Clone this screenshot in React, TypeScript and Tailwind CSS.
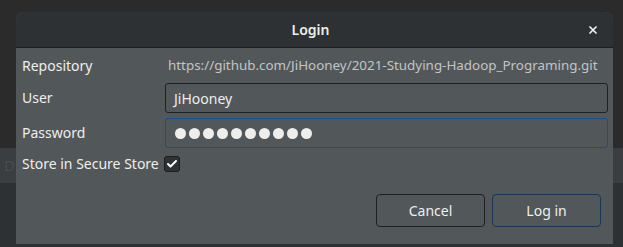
import { Check, X } from 'lucide-react';

const DOTS = 10;

export default function App() {
    return (
        <div className="relative w-[623px] h-[247px] overflow-hidden bg-[#2b2b2b] font-['Noto_Sans',sans-serif]">
            {/* window underneath the dialog */}
            <div className="flex flex-col h-full">
                <div className="h-[148px]" />
                <div className="h-[35px] bg-[#3b3e40] flex items-center px-1 text-[#4a4d4f] text-[15px]">D</div>
                <div className="flex-1 bg-[#2e3134]" />
            </div>

            <div className="absolute left-[16px] top-[12px] w-[597px] h-[232px] flex flex-col rounded-t-[8px] overflow-hidden bg-[#52575a] text-[#eeeeec] text-[14px]">
                <div className="relative h-[36px] shrink-0 flex items-center justify-center pr-[8px] bg-[#2d3134] border-b border-[#1c1f20]">
                    <span className="font-semibold text-[14px] text-[#eeeeec]">Login</span>
                    <X className="absolute right-[14px] top-1/2 -translate-y-1/2 w-[12px] h-[12px]" strokeWidth={3.5} />
                </div>

                <div className="flex-1 flex flex-col pl-[6px] pr-[5px] pt-[11px]">
                    <div className="grid grid-cols-[143px_minmax(0,1fr)] items-center gap-y-[5px]">
                        <span className="leading-none">Repository</span>
                        <span className="pl-[3px] text-[#c2c5c5] text-[13.4px] leading-none whitespace-nowrap">
                            https://github.com/JiHooney/2021-Studying-Hadoop_Programing.git
                        </span>

                        <span className="leading-none mt-[5px]">User</span>
                        <div className="mt-[5px] h-[30px] rounded-[3px] border border-[#1f2223] bg-[#52575a] flex items-center px-[8px]">
                            JiHooney
                        </div>

                        <span className="leading-none">Password</span>
                        <div className="h-[30px] rounded-[3px] border border-[#174e8c] bg-[#52575a] flex items-center gap-[3px] px-[9px]">
                            {Array.from({ length: DOTS }).map((_, i) => (
                                <span key={i} className="w-[11px] h-[11px] rounded-full bg-[#eeeeec]" />
                            ))}
                        </div>
                    </div>

                    <div className="flex items-center gap-[5px] mt-[5px]">
                        <span>Store in Secure Store</span>
                        <span className="w-[16px] h-[16px] rounded-[3px] border border-[#1b1d1e] bg-[#2e3234] flex items-center justify-center">
                            <Check className="w-[12px] h-[12px] text-white" strokeWidth={4} />
                        </span>
                    </div>

                    <div className="flex justify-end gap-[7px] mt-auto mb-[17px] pr-[7px]">
                        <button className="w-[109px] h-[33px] rounded-[4px] border border-[#1f2223] bg-[#52575a] text-[#eeeeec]">
                            Cancel
                        </button>
                        <button className="w-[109px] h-[33px] rounded-[4px] border border-[#1b3655] bg-[#52575a] text-[#eeeeec]">
                            Log in
                        </button>
                    </div>
                </div>
            </div>
        </div>
    );
}
